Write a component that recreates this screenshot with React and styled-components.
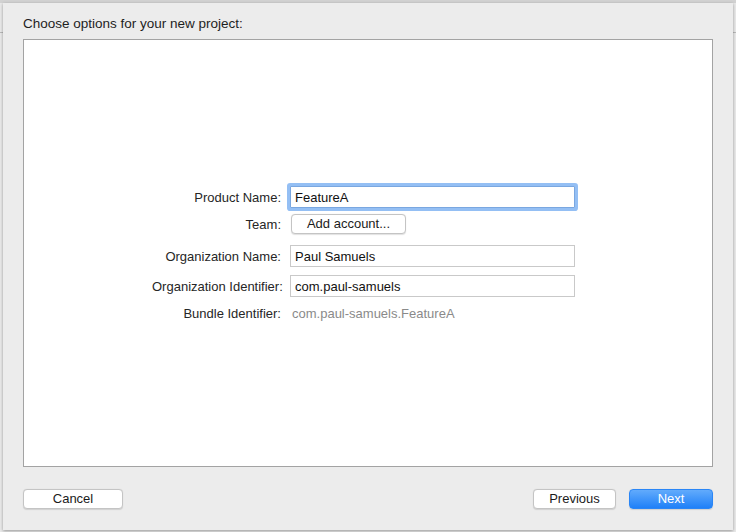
import React from "react";
import styled, { createGlobalStyle } from "styled-components";

const GlobalStyle = createGlobalStyle`
    html, body {
        margin: 0;
        padding: 0;
    }
    body {
        width: 736px;
        height: 532px;
        overflow: hidden;
        font-family: "Liberation Sans", Arial, sans-serif;
        background:
            linear-gradient(#d2d2d2, #d2d2d2) top / 100% 3px no-repeat,
            linear-gradient(#b9b9b9, #b9b9b9) 0 32px / 100% 1px no-repeat,
            #e9e9e9;
    }
`;

const Backdrop = styled.div`
    padding: 3px 3px 2px 3px;
    height: 532px;
    box-sizing: border-box;
`;

const Sheet = styled.div`
    height: 527px;
    box-sizing: border-box;
    background: #ececec;
    box-shadow: 0 1px 3px rgba(0, 0, 0, 0.35);
    padding: 13px 20px 21px 20px;
    display: flex;
    flex-direction: column;
`;

const Heading = styled.div`
    font-size: 13.5px;
    line-height: 16px;
    color: #1e1e1e;
    margin-bottom: 7px;
`;

const Panel = styled.div`
    height: 428px;
    box-sizing: border-box;
    background: #fff;
    border: 1px solid #a3a3a3;
    display: flex;
    align-items: center;
    justify-content: center;
`;

const Form = styled.div`
    display: flex;
    flex-direction: column;
    margin: 2px 9px 0 0;
`;

const Row = styled.div`
    display: grid;
    grid-template-columns: 129px 285px;
    column-gap: 9px;
    align-items: center;
    margin-top: ${(p) => p.$gap || 0}px;
    min-height: ${(p) => p.$height || 22}px;
`;

const Label = styled.div`
    font-size: 13px;
    color: #262626;
    text-align: right;
    white-space: nowrap;
`;

const Field = styled.input`
    height: 22px;
    width: 285px;
    box-sizing: border-box;
    border: 1px solid ${(p) => (p.$focused ? "#7aa7e0" : "#c9c9c9")};
    box-shadow: ${(p) => (p.$focused ? "0 0 0 3px #94bff4" : "none")};
    border-radius: ${(p) => (p.$focused ? "1px" : "0")};
    padding: 0 4px;
    font-family: "Liberation Sans", Arial, sans-serif;
    font-size: 13px;
    color: #111;
    outline: none;
    background: #fff;
`;

const Value = styled.div`
    font-size: 13px;
    color: #8a8a8a;
    padding-left: 2px;
`;

const Button = styled.button`
    height: 20px;
    width: ${(p) => p.$width}px;
    box-sizing: border-box;
    margin-left: ${(p) => p.$offset || 0}px;
    border-radius: 4px;
    border: 1px solid ${(p) => (p.$primary ? "#2a86f6" : "#c4c4c4")};
    background: ${(p) =>
        p.$primary ? "linear-gradient(#62abfc, #1f80f8)" : "#fff"};
    box-shadow: 0 0.5px 1px rgba(0, 0, 0, 0.12);
    color: ${(p) => (p.$primary ? "#fff" : "#1b1b1b")};
    font-family: "Liberation Sans", Arial, sans-serif;
    font-size: 13px;
    line-height: 18px;
    padding: 0;
    text-align: center;
    cursor: default;
`;

const Footer = styled.div`
    margin-top: 22px;
    display: flex;
    align-items: center;
    gap: 13px;
`;

const Spacer = styled.div`
    flex: 1;
`;

export default function App() {
    return (
        <>
            <GlobalStyle />
            <Backdrop>
                <Sheet>
                    <Heading>Choose options for your new project:</Heading>
                    <Panel>
                        <Form>
                            <Row>
                                <Label>Product Name:</Label>
                                <Field $focused defaultValue="FeatureA" />
                            </Row>
                            <Row $gap={6} $height={20}>
                                <Label>Team:</Label>
                                <Button $width={115} $offset={1}>
                                    Add account...
                                </Button>
                            </Row>
                            <Row $gap={11}>
                                <Label>Organization Name:</Label>
                                <Field defaultValue="Paul Samuels" />
                            </Row>
                            <Row $gap={8}>
                                <Label>Organization Identifier:</Label>
                                <Field defaultValue="com.paul-samuels" />
                            </Row>
                            <Row $gap={7} $height={18}>
                                <Label>Bundle Identifier:</Label>
                                <Value>com.paul-samuels.FeatureA</Value>
                            </Row>
                        </Form>
                    </Panel>
                    <Footer>
                        <Button $width={100}>Cancel</Button>
                        <Spacer />
                        <Button $width={83}>Previous</Button>
                        <Button $width={84} $primary>
                            Next
                        </Button>
                    </Footer>
                </Sheet>
            </Backdrop>
        </>
    );
}
